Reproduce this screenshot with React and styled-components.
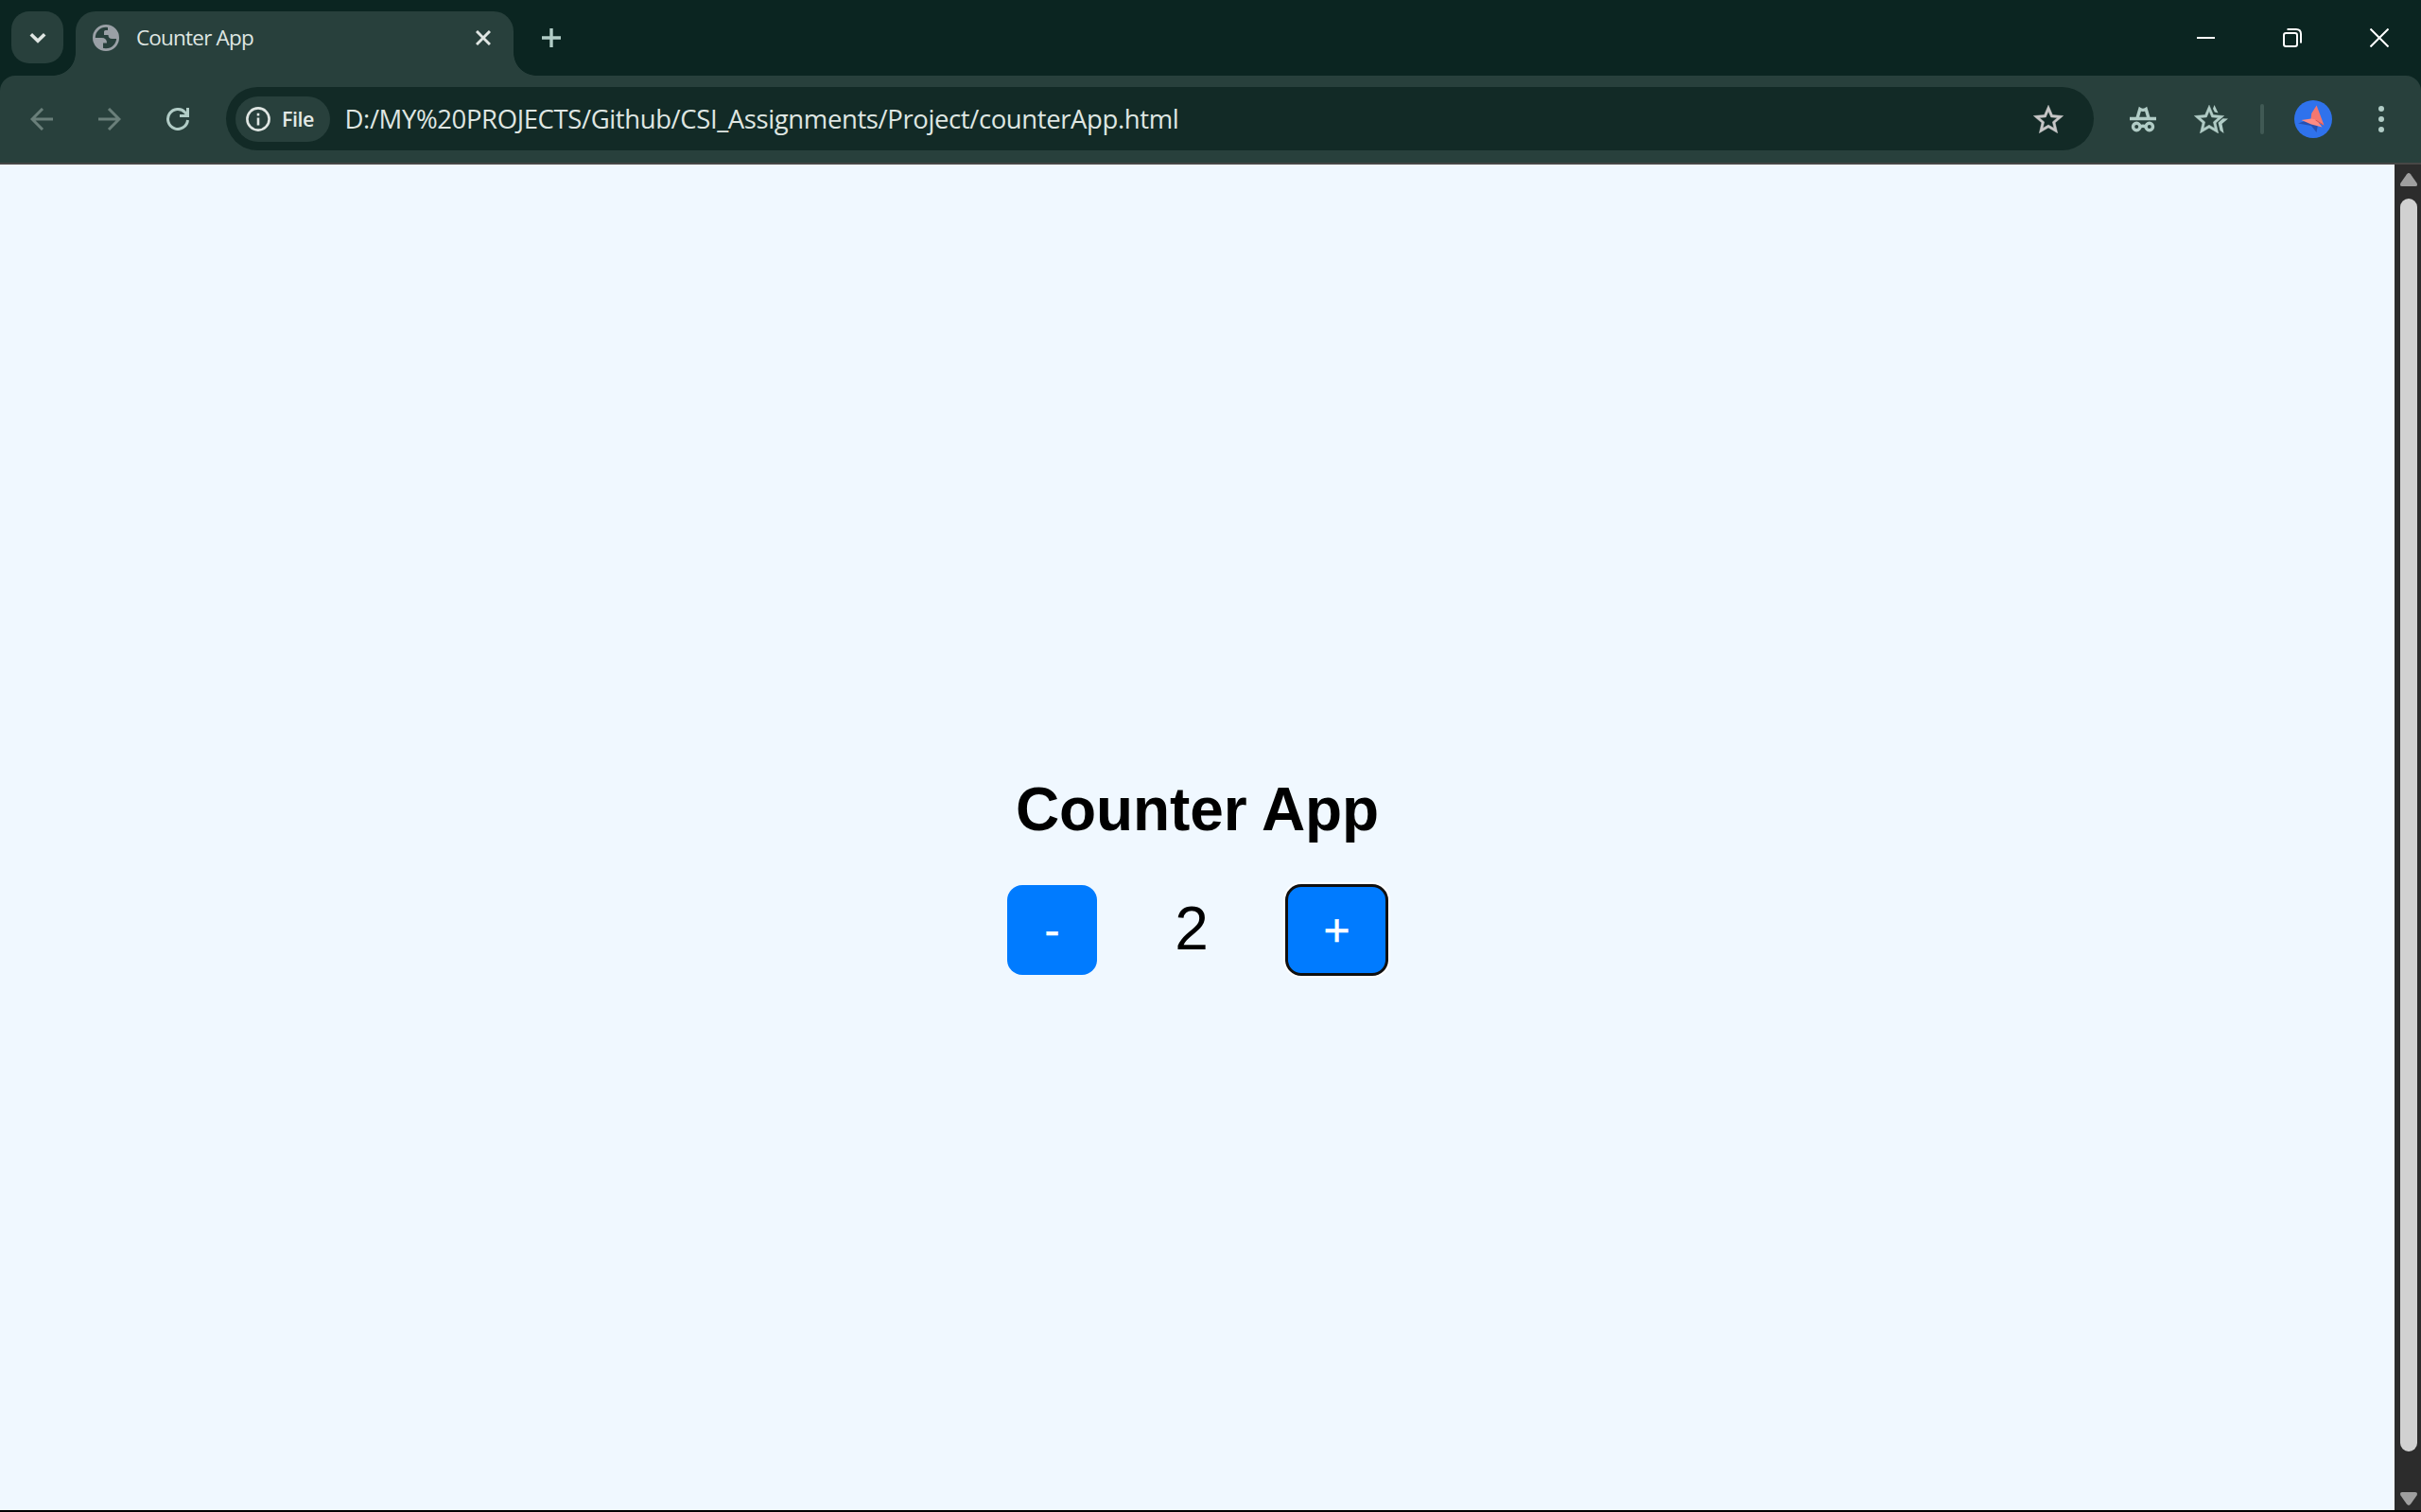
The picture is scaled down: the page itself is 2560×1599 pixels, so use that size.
import React from "react";
import styled, { createGlobalStyle } from "styled-components";

const Global = createGlobalStyle`
  * { box-sizing: border-box; }
  html, body { margin: 0; padding: 0; background: #000; overflow: hidden; }
  svg { display: block; flex: none; }
`;

const ui = `"Open Sans", "Noto Sans", sans-serif`;

const Window = styled.div`
  display: flex;
  flex-direction: column;
  width: 2560px;
  height: 1599px;
  border-bottom: 2px solid #000;
  background: #0b2521;
  font-family: ${ui};
`;
const TabStrip = styled.header`
  display: flex;
  align-items: flex-start;
  height: 80px;
  padding: 12px 34px 0 12px;
`;
const TabSearch = styled.button`
  display: grid;
  place-items: center;
  width: 55px;
  height: 55px;
  margin-right: 13px;
  padding: 0;
  border: 0;
  border-radius: 19px;
  background: #28403c;
`;
const Tab = styled.div`
  position: relative;
  display: flex;
  align-items: center;
  width: 463px;
  height: 68px;
  padding: 0 24px 12px 18px;
  border-radius: 21px 21px 0 0;
  background: #28403c;
`;
const TabFoot = styled.span`
  position: absolute;
  bottom: 0;
  ${(p) => (p.$side === "left" ? "right: 100%" : "left: 100%")};
  width: 24px;
  height: 24px;
  background: radial-gradient(
    circle at ${(p) => (p.$side === "left" ? "0 0" : "100% 0")},
    transparent 23.5px,
    #28403c 24.2px
  );
`;
const TabTitle = styled.span`
  flex: 1;
  margin-left: 18px;
  font-size: 22.5px;
  line-height: 30px;
  letter-spacing: -0.8px;
  color: #dfe6e2;
  white-space: nowrap;
`;
const NewTab = styled.div`
  padding: 18px 0 0 30px;
`;
const WindowControls = styled.div`
  display: flex;
  gap: 72px;
  margin-left: auto;
  padding-top: 18px;
`;
const Toolbar = styled.div`
  display: flex;
  align-items: center;
  height: 94px;
  padding: 0 39px 1px 32px;
  border-bottom: 2px solid #474746;
  border-radius: 16px 16px 0 0;
  background: #28403c;
`;
const NavButtons = styled.div`
  display: flex;
  gap: 48px;
  width: 207px;
`;
const AddressBar = styled.div`
  display: flex;
  align-items: center;
  width: 1975px;
  height: 67px;
  padding: 0 32px 0 10px;
  border-radius: 34px;
  background: #122a26;
`;
const SchemeChip = styled.div`
  display: flex;
  align-items: center;
  gap: 12px;
  width: 100px;
  height: 48px;
  padding-left: 11px;
  border-radius: 24px;
  background: #28403c;
  color: #e3e9e6;
  font-size: 21.5px;
  font-weight: 600;
  letter-spacing: -0.5px;
`;
const Url = styled.span`
  flex: 1;
  margin-left: 15.5px;
  font-size: 27.5px;
  line-height: 40px;
  letter-spacing: -0.39px;
  color: #dfe6e2;
  white-space: nowrap;
`;
const Actions = styled.div`
  display: flex;
  align-items: center;
  flex: 1;
  padding-left: 38px;
`;
const Divider = styled.span`
  width: 4px;
  height: 32px;
  margin: 0 32px 0 34px;
  border-radius: 2px;
  background: #405954;
`;
const Spacer = styled.span`
  width: ${(p) => p.$w}px;
`;
const Viewport = styled.div`
  display: flex;
  height: 1423px;
`;
const Page = styled.main`
  display: flex;
  flex-direction: column;
  align-items: center;
  flex: 1;
  padding-top: 645px;
  background: #f0f8ff;
  color: #000;
  font-family: "Liberation Sans", Arial, sans-serif;
`;
const Heading = styled.h1`
  margin: 0 0 43px;
  font-size: 64px;
  line-height: 74px;
  font-weight: 700;
  letter-spacing: -0.1px;
`;
const Counter = styled.div`
  display: flex;
  align-items: center;
`;
const CounterButton = styled.button`
  width: ${(p) => p.$w}px;
  height: 95px;
  padding: 0 0 1px;
  border: 0;
  border-radius: 16px;
  background: #007bff;
  color: #fff;
  font: 48px/55px "Liberation Sans", Arial, sans-serif;
  -webkit-text-stroke: 0.5px #fff;
  ${(p) =>
    p.$focused &&
    `outline: 3px solid #101010; outline-offset: -2px; box-shadow: 0 0 0 3px #fff;`}
`;
const Count = styled.span`
  width: 200px;
  padding-bottom: 3px;
  font-size: 64px;
  line-height: 74px;
  text-align: center;
`;
const Scrollbar = styled.aside`
  display: flex;
  flex-direction: column;
  align-items: center;
  width: 28px;
  padding: 9px 0 5px 2px;
  background: #2c2c2c;
`;
const Thumb = styled.div`
  width: 18px;
  height: 1325px;
  margin: 13px 0 43px;
  border-radius: 9px;
  background: #d1d1d1;
`;

const MINT = "#b1ccc6";
const DIM = "#6a7f7a";
const LIGHT = "#e0e6e3";

function Icon({ w, h, children, box, color = MINT, sw = 3 }) {
  return (
    <svg width={w} height={h} viewBox={box || `0 0 ${w} ${h}`} fill="none" stroke={color} strokeWidth={sw}>
      {children}
    </svg>
  );
}

const STAR =
  "M22 9.24l-7.19-.62L12 2 9.19 8.63 2 9.24l5.46 4.73L5.82 21 12 17.27 18.18 21l-1.63-7.03L22 9.24zM12 15.4l-3.76 2.27 1-4.28-3.32-2.88 4.38-.38L12 6.1l1.71 4.04 4.38.38-3.32 2.88 1 4.28L12 15.4z";

export default function App() {
  return (
    <Window>
      <Global />
      <TabStrip>
        <TabSearch>
          <Icon w={18} h={12} color={LIGHT} sw={3.6}>
            <path d="M1.8 2.2 9 9.2 16.2 2.2" />
          </Icon>
        </TabSearch>
        <Tab>
          <TabFoot $side="left" />
          <TabFoot $side="right" />
          <Icon w={28} h={28} color="#9aa0a6" sw={2.8}>
            <circle cx="14" cy="14" r="12.6" />
            <path
              fill="#9aa0a6"
              stroke="none"
              d="M1 14H9.5Q15 14 15 19.5H11V26.5A13 13 0 0 1 1 14ZM18 2Q27 6 27 15H20.5Q16.5 15 16.5 11H12V7.5Q12 6 13.5 6H16V3Z"
            />
          </Icon>
          <TabTitle>Counter App</TabTitle>
          <Icon w={16} h={16} color={LIGHT}>
            <path d="M1 1 15 15M15 1 1 15" />
          </Icon>
        </Tab>
        <NewTab>
          <Icon w={20} h={20} sw={3.4}>
            <path d="M10 0V20M0 10H20" />
          </Icon>
        </NewTab>
        <WindowControls>
          <Icon w={20} h={20} color="#fff" sw={2}>
            <path d="M1 10H20" />
          </Icon>
          <Icon w={20} h={20} color="#fff" sw={2}>
            <rect x="1" y="5" width="14" height="14" rx="2.2" />
            <path d="M4.5 1H14Q19 1 19 6V15.5" />
          </Icon>
          <Icon w={20} h={20} color="#fff" sw={2}>
            <path d="M.5 .5 19.5 19.5M19.5 .5 .5 19.5" />
          </Icon>
        </WindowControls>
      </TabStrip>
      <Toolbar>
        <NavButtons>
          <Icon w={24} h={24} color={DIM}>
            <path d="M24 12H2.5M13 1 2 12 13 23" />
          </Icon>
          <Icon w={24} h={24} color={DIM}>
            <path d="M0 12H21.5M11 1 22 12 11 23" />
          </Icon>
          <Icon w={24} h={24}>
            <path d="M22.5 13A10.5 10.5 0 1 1 19.8 4.9L22.5 8M22.5 0V8.5H14" />
          </Icon>
        </NavButtons>
        <AddressBar>
          <SchemeChip>
            <Icon w={26} h={26} color={LIGHT} sw={2.6}>
              <circle cx="13" cy="13" r="11.6" />
              <path d="M13 11.5V19.5M13 6.7V9.5" />
            </Icon>
            File
          </SchemeChip>
          <Url>D:/MY%20PROJECTS/Github/CSI_Assignments/Project/counterApp.html</Url>
          <svg
            width="32"
            height="30"
            viewBox="1.8 1.8 20.4 19.4"
            preserveAspectRatio="none"
            fill="#c7c7c7"
            stroke="#c7c7c7"
            strokeWidth=".3"
          >
            <path d={STAR} />
          </svg>
        </AddressBar>
        <Actions>
          <Icon w={28} h={28} sw={3.4}>
            <path d="M0 13.5H28M8 13 10.8 3.4Q14 5.4 17.2 3.4L20 13M11 21.8Q14 20.6 17 21.8" />
            <circle cx="7.2" cy="22" r="3.7" />
            <circle cx="20.8" cy="22" r="3.7" />
          </Icon>
          <Spacer $w={40} />
          <svg width="36" height="30" viewBox="0 0 36 30" fill={MINT}>
            <path d={STAR} transform="scale(1.57) translate(-1.8 -1.9)" stroke={MINT} strokeWidth=".3" />
            <path d="M21.5 0 25.5 8.5 21.8 7.6 20 4ZM36 14.5 29.5 20 31.5 30 27.5 27 25.5 18.8 30.5 14.2Z" />
          </svg>
          <Divider />
          <svg width="40" height="40" viewBox="0 0 40 40">
            <circle cx="20" cy="20" r="20" fill="#2f72ec" />
            <path d="M4 24.5 14 21 25 26 23.5 34 18 27Z" fill="#2750b0" />
            <path d="M23.6 5.5 18.2 14 17.5 20 24 23 31.5 26.5Z" fill="#f4776f" />
            <path d="M7.5 21 18 19.5 23 20.5 29.5 28.5 18 25.5Z" fill="#ff8b82" />
            <path d="M22.5 21 30.5 25.8" stroke="#d9534f" strokeWidth="1" />
          </svg>
          <Spacer $w={49} />
          <svg width="6" height="28" viewBox="0 0 6 28" fill={MINT}>
            <circle cx="3" cy="3" r="3" />
            <circle cx="3" cy="14" r="3" />
            <circle cx="3" cy="25" r="3" />
          </svg>
        </Actions>
      </Toolbar>
      <Viewport>
        <Page>
          <Heading>Counter App</Heading>
          <Counter>
            <CounterButton $w={95}>-</CounterButton>
            <Count>2</Count>
            <CounterButton $w={107} $focused>+</CounterButton>
          </Counter>
        </Page>
        <Scrollbar>
          <svg width="18" height="14" viewBox="0 0 18 14" fill="#9f9f9f">
            <path d="M7 1.2Q9-1 11 1.2L17.5 10.5Q19 14 16 14H2Q-1 14 .5 10.5Z" />
          </svg>
          <Thumb />
          <svg width="18" height="14" viewBox="0 0 18 14" fill="#9f9f9f">
            <path d="M7 12.8Q9 15 11 12.8L17.5 3.5Q19 0 16 0H2Q-1 0 .5 3.5Z" />
          </svg>
        </Scrollbar>
      </Viewport>
    </Window>
  );
}
